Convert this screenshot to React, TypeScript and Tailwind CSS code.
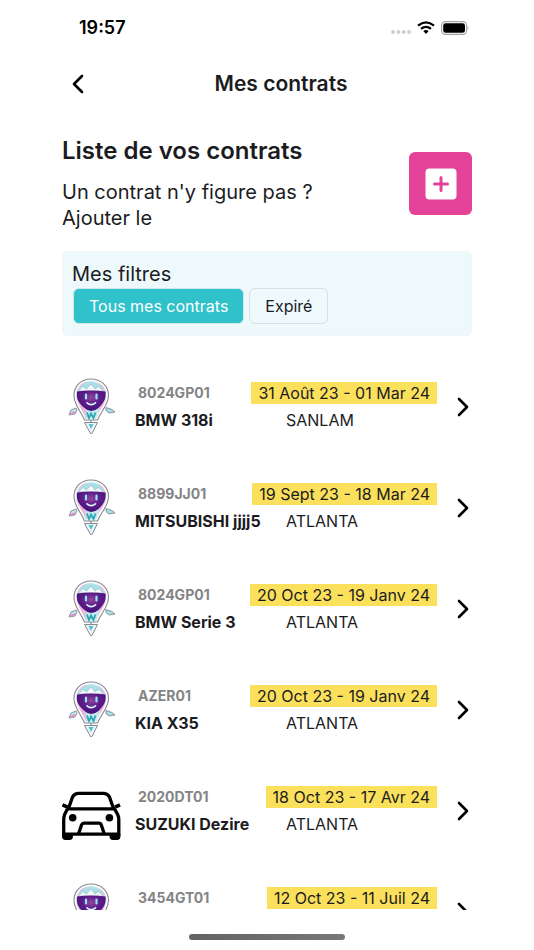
type Contract = {
  id: string;
  vehicle: string;
  period: string;
  insurer: string;
  icon: "robot" | "car";
};

const contracts: Contract[] = [
  { id: "8024GP01", vehicle: "BMW 318i", period: "31 Août 23 - 01 Mar 24", insurer: "SANLAM", icon: "robot" },
  { id: "8899JJ01", vehicle: "MITSUBISHI jjjj5", period: "19 Sept 23 - 18 Mar 24", insurer: "ATLANTA", icon: "robot" },
  { id: "8024GP01", vehicle: "BMW Serie 3", period: "20 Oct 23 - 19 Janv 24", insurer: "ATLANTA", icon: "robot" },
  { id: "AZER01", vehicle: "KIA X35", period: "20 Oct 23 - 19 Janv 24", insurer: "ATLANTA", icon: "robot" },
  { id: "2020DT01", vehicle: "SUZUKI Dezire", period: "18 Oct 23 - 17 Avr 24", insurer: "ATLANTA", icon: "car" },
  { id: "3454GT01", vehicle: "", period: "12 Oct 23 - 11 Juil 24", insurer: "", icon: "robot" },
];

function RobotIcon() {
  return (
    <svg viewBox="0 0 60 60" className="size-[60px]" aria-hidden="true">
      <defs>
        <radialGradient id="face" cx="50%" cy="35%" r="60%">
          <stop offset="0" stopColor="#93479f" />
          <stop offset="0.5" stopColor="#5f1d8a" />
          <stop offset="1" stopColor="#45127a" />
        </radialGradient>
        <linearGradient id="shell" x1="0" x2="1" y1="0" y2="0">
          <stop offset="0" stopColor="#d9eef2" />
          <stop offset="0.2" stopColor="#f2a9d3" />
          <stop offset="0.4" stopColor="#bfe9ee" />
          <stop offset="0.7" stopColor="#c9eaf0" />
          <stop offset="0.85" stopColor="#f2a9d3" />
          <stop offset="1" stopColor="#d9eef2" />
        </linearGradient>
      </defs>
      <path d="M14 31 L9 33 L7 38 L13 37 L15 33 Z" fill="#b9e6ec" stroke="#8b8b93" strokeWidth="0.9" />
      <path d="M8.500 36.800 L13.500 35" stroke="#ee86c1" strokeWidth="1.800" />
      <path d="M44 30.500 L50 32.500 L53 35 L47 36 L44 33.500 Z" fill="#9fdfe6" stroke="#8b8b93" strokeWidth="0.9" />
      <path d="M29 2 C19 2 12 9 12 18.500 C12 28 19 34 22.500 43 H35.500 C39 34 46.500 28 46.500 18.500 C46.500 9 39 2 29 2 Z" fill="#fff" stroke="#88888f" strokeWidth="1.100" />
      <path d="M29 4 C20 4 14 10.500 14 18.500 C14 27 21 32 23.500 41.500 H34.500 C37 32 44.500 27 44.500 18.500 C44.500 10.500 38 4 29 4 Z" fill="url(#shell)" />
      <path d="M18 10 C22 3.500 36 3.500 40 10 L42 13 H16 Z" fill="#a6e1e8" />
      <path d="M16.500 14 L21 9.500 L24.500 12 L29 7 L33 12 L36.500 9.500 L41.500 14 Z" fill="#f3f8fb" stroke="#9db2bd" strokeWidth="0.600" />
      <path d="M15 14.500 Q29 12.500 43.500 14.500 C44.500 23 41 26 36.500 31 Q29 37 22.500 31 C17 26 14 23 15 14.500 Z" fill="url(#face)" />
      <path d="M24 17.500 V21.500 M34.500 17.500 V21.500" stroke="#8de9f6" strokeWidth="2.200" strokeLinecap="round" />
      <path d="M25 25.800 Q29 29.500 33.500 25.800" fill="none" stroke="#d9faff" strokeWidth="1.600" strokeLinecap="round" />
      <path d="M25 35.500 L27 41 L29 36.500 L31.500 41 L33.500 35.500" fill="none" stroke="#2ba7b2" strokeWidth="1.800" />
      <path d="M29 43 V46" stroke="#88888f" strokeWidth="1.200" />
      <path d="M22.500 45.500 H35.500 L30 56.500 H28.500 Z" fill="#eaf5f7" stroke="#88888f" strokeWidth="1" />
      <path d="M26.500 47 H31.500 L29 52 Z" fill="#4fc3cd" />
    </svg>
  );
}

function CarIcon() {
  return (
    <svg viewBox="0 0 60 60" className="size-[60px]" fill="none" stroke="#000" strokeWidth="3.300" strokeLinejoin="round" aria-hidden="true">
      <path d="M6.500 27.500 L10.500 16 Q12.300 12.300 16.500 12.300 H41.500 Q45.500 12.300 47.500 16 L51.500 27.500" />
      <path d="M5 27.800 H53" />
      <path d="M0.500 23.800 L5.500 26.200 M58 23.800 L53 26.200" strokeWidth="3.600" />
      <path d="M5.500 27.800 L2.600 33.500 Q1.700 36 1.700 39 V54 M52.500 27.800 L55.700 33.500 Q56.800 36 56.800 39 V54" />
      <path d="M2 53.200 H57" />
      <path d="M16.500 53 L19.500 44 Q20.300 42.200 22 42.200 H37 Q38.700 42.200 39.300 44 L42.300 53" />
      <path d="M0 53 H11 V55 Q11 59 7.500 59 H3.500 Q0 59 0 55 Z M47.500 53 H58.500 V55 Q58.500 59 55 59 H51 Q47.500 59 47.500 55 Z" fill="#000" stroke="none" />
      <circle cx="10.700" cy="36.700" r="3.800" fill="#000" stroke="none" />
      <circle cx="47.400" cy="36.700" r="3.800" fill="#000" stroke="none" />
    </svg>
  );
}

function ContractRow({ contract }: { contract: Contract }) {
  return (
    <li>
      <button type="button" className="flex h-[101px] w-full items-center text-left">
        <span className="mr-[13px] shrink-0">{contract.icon === "robot" ? <RobotIcon /> : <CarIcon />}</span>
        <span className="flex min-w-0 flex-1 flex-col gap-1 pt-px">
          <span className="flex items-center justify-between">
            <span className="pl-[3px] text-sm font-bold text-[#848486]">{contract.id}</span>
            <span className="bg-[#fbe05c] px-[7px] text-base leading-[22px] whitespace-nowrap">{contract.period}</span>
          </span>
          <span className="flex h-6 items-center text-base">
            <span className="w-[151px] shrink-0 font-bold whitespace-nowrap">{contract.vehicle}</span>
            <span>{contract.insurer}</span>
          </span>
        </span>
        <svg viewBox="0 0 12 20" className="mr-[3px] ml-5 h-5 w-3 shrink-0" fill="none" stroke="#000" strokeWidth="2.600" strokeLinecap="round" strokeLinejoin="round" aria-hidden="true">
          <path d="M2 2 L10 10 L2 18" />
        </svg>
      </button>
    </li>
  );
}

function StatusBar() {
  return (
    <div className="flex h-[55px] shrink-0 items-center justify-between pr-[3px] pl-[17px] text-black">
      <span className="text-lg font-semibold">19:57</span>
      <div className="flex items-center gap-[6px]">
        <svg viewBox="0 0 20 12" className="h-3 w-5" fill="#cdcdcf" aria-hidden="true">
          <circle cx="2" cy="10" r="1.900" />
          <circle cx="7.400" cy="10" r="1.900" />
          <circle cx="12.800" cy="10" r="1.900" />
          <circle cx="18" cy="10" r="1.900" />
        </svg>
        <svg viewBox="0 0 18 13" className="h-[13px] w-[18px]" fill="none" stroke="#000" strokeWidth="2.300" aria-hidden="true">
          <path d="M1 4.700 Q9 -2 17 4.700" />
          <path d="M4 7.900 Q9 3.800 14 7.900" />
          <path d="M6.300 10 Q9 7.800 11.700 10 L9 12.900 Z" fill="#000" stroke="none" />
        </svg>
        <svg viewBox="0 0 28 14" className="h-3.5 w-7" aria-hidden="true">
          <rect x="0.600" y="0.600" width="25" height="12.800" rx="3.800" fill="none" stroke="#a3a3a5" strokeWidth="1.100" />
          <rect x="2.200" y="2.200" width="21.800" height="9.600" rx="2.400" fill="#000" />
          <path d="M26.700 4.800 Q28.200 7 26.700 9.200 Z" fill="#9a9a9c" />
        </svg>
      </div>
    </div>
  );
}

export default function App() {
  return (
    <div className="flex h-screen flex-col bg-white px-[62px] font-['Inter','Liberation_Sans',sans-serif] text-[#1c1c1f]">
      <StatusBar />

      <header className="flex h-[57px] shrink-0 items-center">
        <button type="button" aria-label="Retour" className="w-7 pl-[10px]">
          <svg viewBox="0 0 12 20" className="h-5 w-3" fill="none" stroke="#000" strokeWidth="2.600" strokeLinecap="round" strokeLinejoin="round" aria-hidden="true">
            <path d="M10 2 L2 10 L10 18" />
          </svg>
        </button>
        <h1 className="flex-1 text-center text-[21px] font-semibold">Mes contrats</h1>
      </header>

      <section className="mt-6 flex shrink-0 items-center justify-between">
        <div>
          <h2 className="text-2xl leading-[30px] font-semibold">Liste de vos contrats</h2>
          <p className="mt-[13px] text-xl leading-[26px]">
            Un contrat n'y figure pas ?<br />
            Ajouter le
          </p>
        </div>
        <button type="button" aria-label="Ajouter un contrat" className="flex size-[63px] items-center justify-center rounded-md bg-[#e34298]">
          <svg viewBox="0 0 32 32" className="size-8" aria-hidden="true">
            <rect x="0.500" y="0.500" width="31" height="31" rx="4" fill="#fff" />
            <path d="M16 9.500 V22.500 M9.500 16 H22.500" stroke="#e34298" strokeWidth="3" strokeLinecap="round" />
          </svg>
        </button>
      </section>

      <section className="mt-5 h-[85px] shrink-0 rounded-md border border-[#f2f5f5] bg-[#edf9fa] px-[9px] pt-[9px]">
        <h3 className="text-xl leading-[26px]">Mes filtres</h3>
        <div className="flex gap-[5px] pt-px pl-px">
          <button type="button" aria-pressed="true" className="h-9 rounded-md border border-[#d3e6e9] bg-[#2fc2cb] px-[15px] text-base text-white">
            Tous mes contrats
          </button>
          <button type="button" aria-pressed="false" className="h-9 rounded-md border border-[#dcdfe1] px-[15px] text-base">
            Expiré
          </button>
        </div>
      </section>

      <ul className="mt-5 min-h-0 flex-1 overflow-hidden">
        {contracts.map((contract, index) => (
          <ContractRow key={index} contract={contract} />
        ))}
      </ul>

      <div className="flex h-10 shrink-0 items-end justify-center pb-[10px]">
        <div className="h-[6px] w-[156px] rounded-full bg-linear-to-r from-[#626363] to-[#777878]" />
      </div>
    </div>
  );
}
